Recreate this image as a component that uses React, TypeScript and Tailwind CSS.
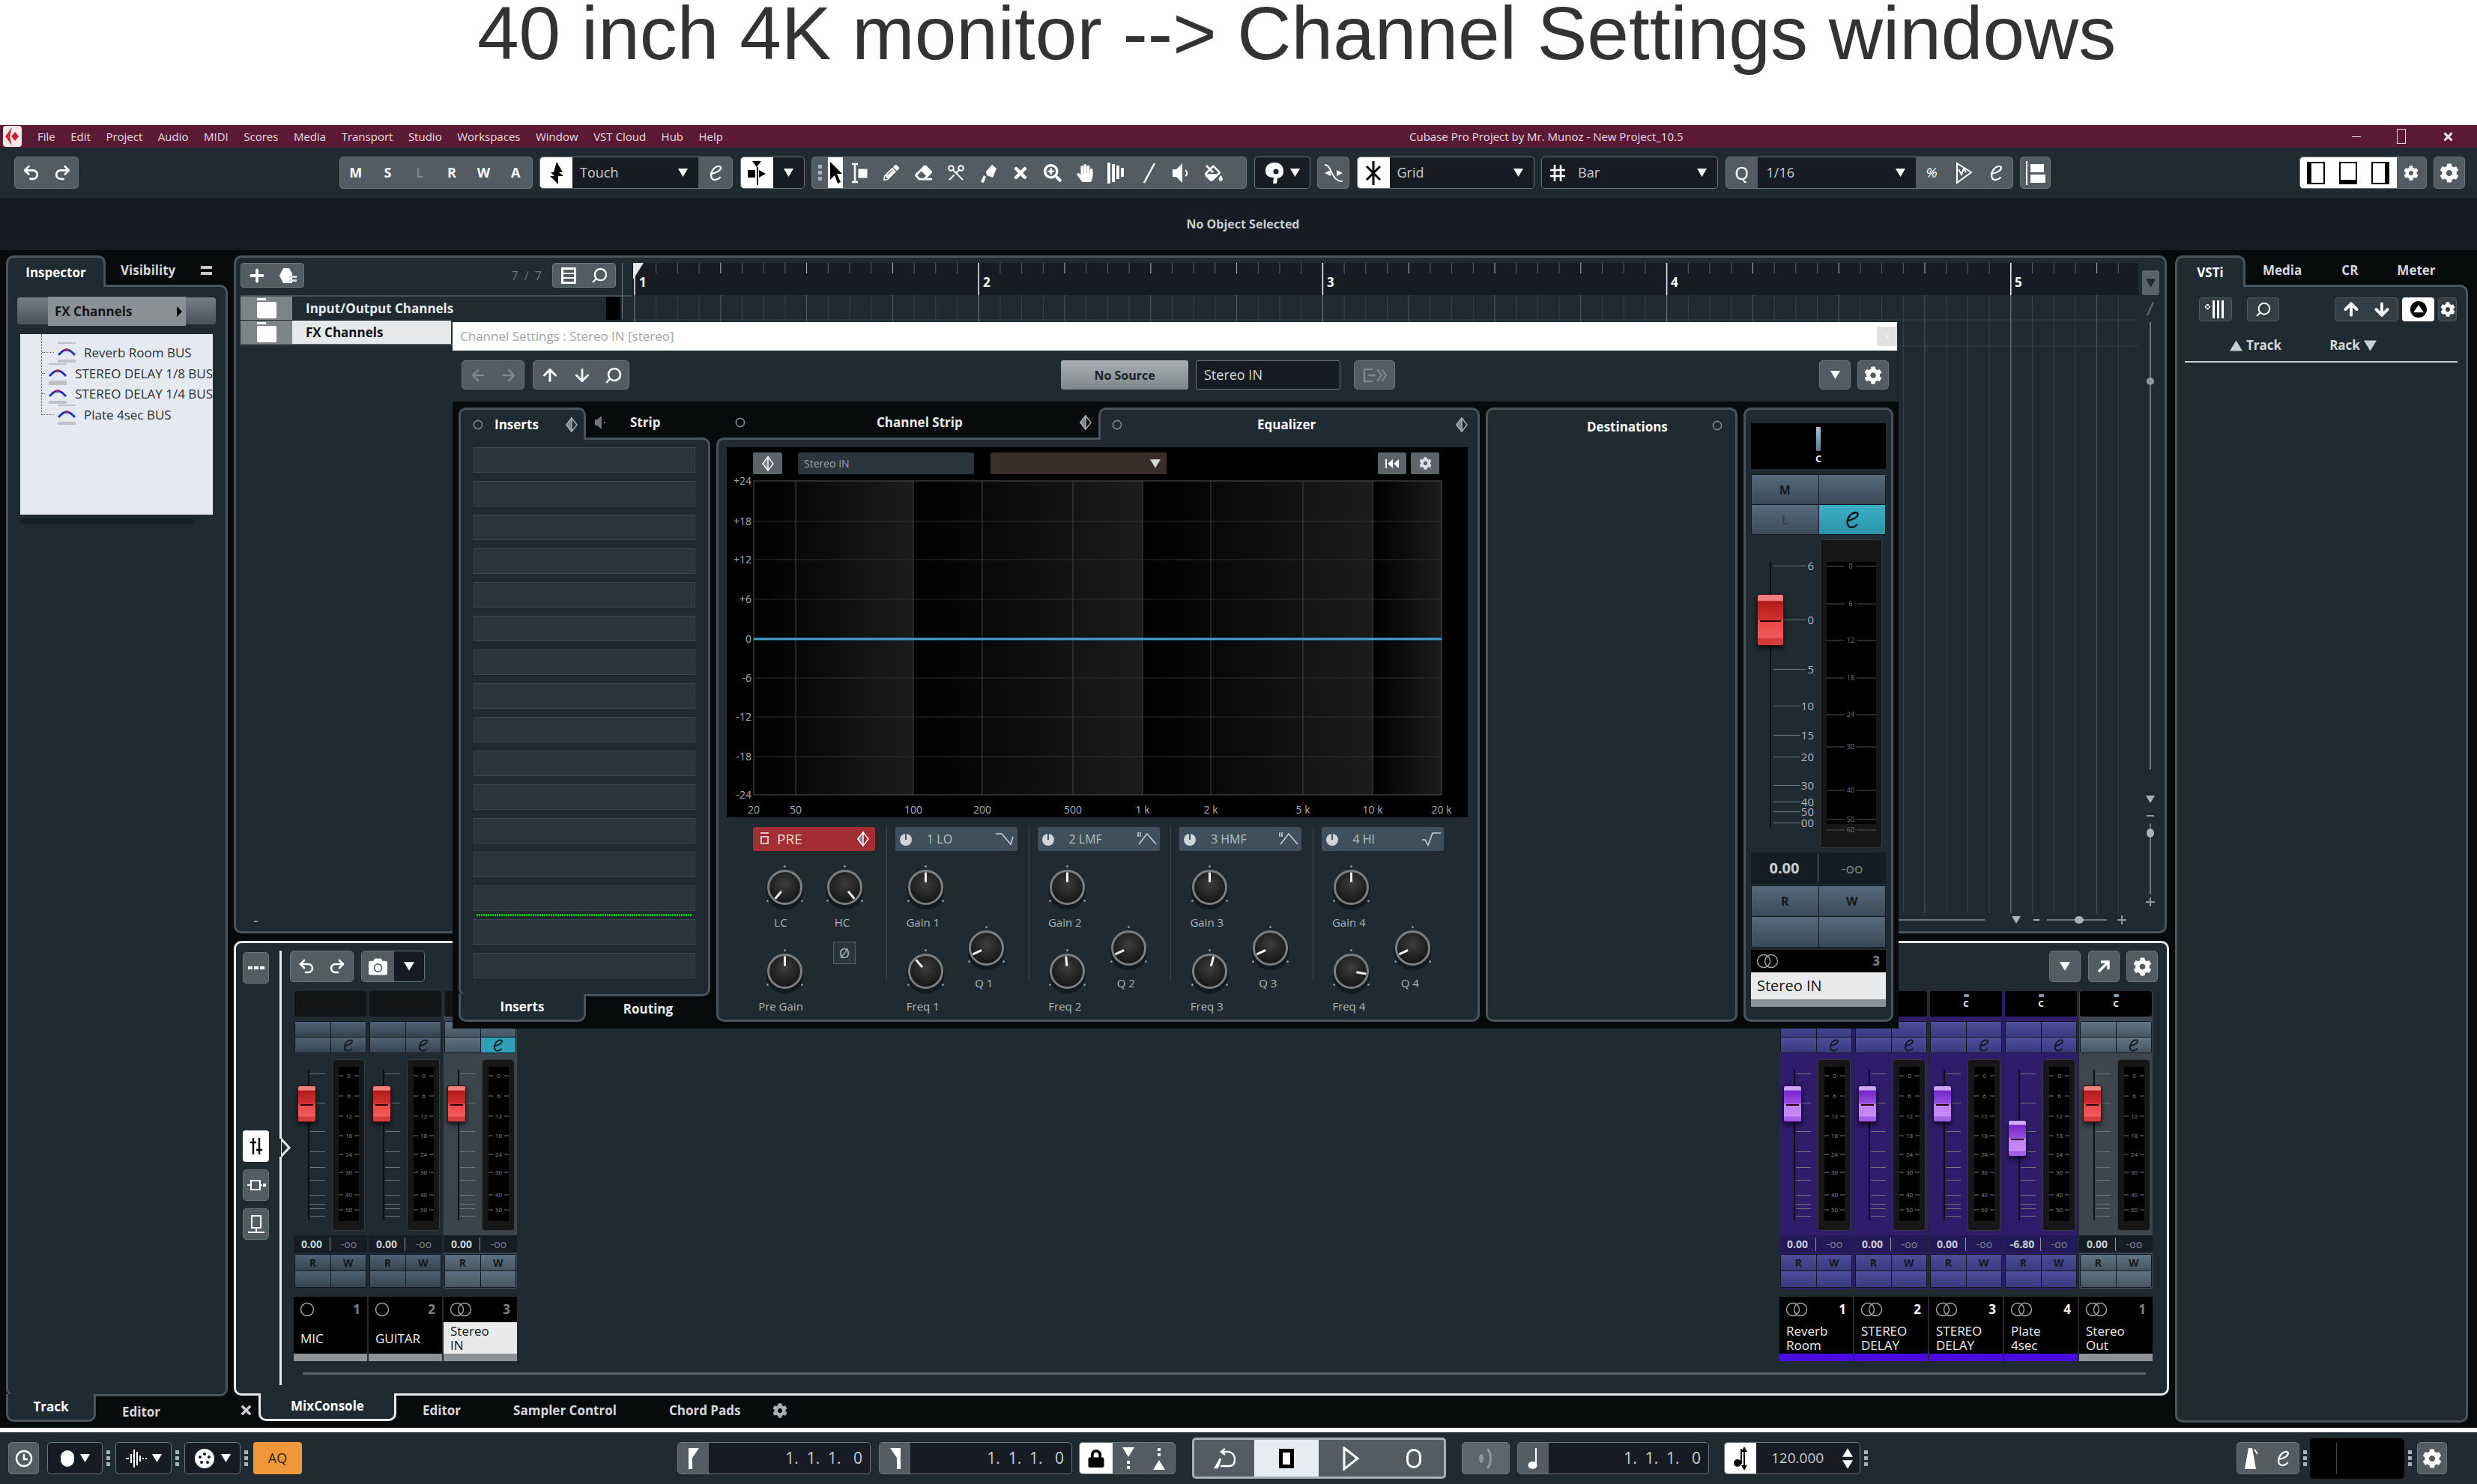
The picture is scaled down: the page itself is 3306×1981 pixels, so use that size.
import type { ReactNode } from 'react';
import { ArrowDown, ArrowLeft, ArrowRight, ArrowUp, Plus, Redo2, Scissors, Search, Undo2 } from 'lucide-react';
import { FaCamera, FaCog, FaEraser, FaFillDrip, FaHandPaper, FaLock, FaPencilAlt, FaSearchPlus, FaTimes } from 'react-icons/fa';

const menus = ['File', 'Edit', 'Project', 'Audio', 'MIDI', 'Scores', 'Media', 'Transport', 'Studio', 'Workspaces', 'Window', 'VST Cloud', 'Hub', 'Help'];

function Caret({ size = 13, up = false, className = 'fill-white' }: { size?: number; up?: boolean; className?: string }) {
  return (
    <svg width={size} height={size} viewBox="0 0 12 12" className={className}>
      <path d={up ? 'M6 1 L12 11 L0 11 Z' : 'M0 1 L12 1 L6 11 Z'} />
    </svg>
  );
}

function IconE({ size = 24, className = 'stroke-white' }: { size?: number; className?: string }) {
  return (
    <svg width={size} height={size} viewBox="0 0 24 24" fill="none" strokeWidth="2.2" strokeLinecap="round" className={className}>
      <path d="M6 13 C12 12 19 9 19 5 C19 2 13 2 9 7 C5 12 5 20 10 21 C13 21.5 16 20 18 18" />
    </svg>
  );
}

function Ring({ size = 14 }: { size?: number }) {
  return (
    <svg width={size} height={size} viewBox="0 0 14 14" fill="none" className="stroke-[#7d878c]" strokeWidth="1.6">
      <circle cx="7" cy="7" r="5.6" />
    </svg>
  );
}

function Rings({ mono = false }: { mono?: boolean }) {
  return (
    <svg width="32" height="20" viewBox="0 0 32 20" fill="none" className="stroke-[#a3a9ac]" strokeWidth="1.4">
      {mono ? <circle cx="11" cy="10" r="8.5" /> : (<><circle cx="11" cy="10" r="8.5" /><circle cx="21" cy="10" r="8.5" /></>)}
    </svg>
  );
}

function Diamond({ className = 'stroke-[#aab2b6]' }: { className?: string }) {
  return (
    <svg width="16" height="20" viewBox="0 0 16 20" fill="none" strokeWidth="1.4" className={className}>
      <path d="M8 1 L15 10 L8 19 L1 10 Z" />
      <path d="M8 1 L1 10 L8 19 Z" className="fill-[#7a8489]" />
    </svg>
  );
}

function Gear({ size = 22, className = 'text-white' }: { size?: number; className?: string }) {
  return <FaCog size={size} className={className} />;
}

function Group({ className = '', children }: { className?: string; children?: ReactNode }) {
  return <div className={`flex h-[43px] items-stretch overflow-hidden rounded-[5px] border border-[#6b757a] bg-[#525c62] ${className}`}>{children}</div>;
}

function Cell({ className = 'w-[43px]', children }: { className?: string; children?: ReactNode }) {
  return <div className={`flex shrink-0 items-center justify-center ${className}`}>{children}</div>;
}

function SelectField({ label, w, icon }: { label: string; w: string; icon: ReactNode }) {
  return (
    <div className={`flex h-[43px] overflow-hidden rounded-[5px] border border-[#6b757a] bg-[#161c22] ${w}`}>
      {icon}
      <span className="ml-[10px] self-center text-[18px] text-[#c9ced2]">{label}</span>
      <span className="ml-auto mr-[14px] self-center"><Caret /></span>
    </div>
  );
}

function Dots() {
  return (
    <div className="flex w-[8px] flex-col items-center justify-center gap-[3px]">
      <div className="h-[5px] w-[5px] bg-[#aab2b6]" />
      <div className="h-[5px] w-[5px] bg-[#aab2b6]" />
      <div className="h-[5px] w-[5px] bg-[#aab2b6]" />
    </div>
  );
}

function Toolbar() {
  const tools: ReactNode[] = [
    <svg key="r" width="26" height="30" viewBox="0 0 26 30" className="fill-white stroke-white"><path d="M3 3 H11 M3 27 H11 M7 3 V27" strokeWidth="2.5" /><rect x="12" y="10" width="11" height="11" /></svg>,
    <FaPencilAlt key="p" size={21} className="text-white" />,
    <FaEraser key="e" size={23} className="text-white" />,
    <Scissors key="s" size={26} strokeWidth={1.8} className="rotate-90 text-white" />,
    <svg key="g" width="24" height="28" viewBox="0 0 24 28" className="fill-white"><path d="M9 12 L17 3 L23 8 L18 20 L10 17 Z" /><path d="M6 17 L9 19 L6 27 L2 26 Z" /></svg>,
    <FaTimes key="x" size={24} className="text-white" />,
    <FaSearchPlus key="z" size={24} className="text-white" />,
    <FaHandPaper key="h" size={24} className="text-white" />,
    <svg key="b" width="28" height="30" viewBox="0 0 28 30" className="fill-white"><rect x="1" y="1" width="4" height="28" /><rect x="7" y="3" width="4" height="24" /><rect x="13" y="5" width="4" height="18" /><rect x="19" y="8" width="4" height="12" /></svg>,
    <svg key="l" width="20" height="30" viewBox="0 0 20 30" className="stroke-white" strokeWidth="2.5"><path d="M17 2 L3 28" /></svg>,
    <svg key="m" width="26" height="28" viewBox="0 0 26 28" className="fill-white"><path d="M14 1 V27 L6 19 H1 V9 H6 Z" /><path d="M18 10 C21 12 21 16 18 18" fill="none" stroke="#fff" strokeWidth="2" /></svg>,
    <FaFillDrip key="f" size={24} className="text-white" />,
  ];
  return (
    <div className="flex h-[67px] items-center gap-[9.5px] bg-[#202a31] pl-[19px] pr-[16px]">
      <Group className="w-[86px]">
        <Cell className="flex-1"><Undo2 size={25} strokeWidth={2.6} className="text-white" /></Cell>
        <Cell className="flex-1"><Redo2 size={25} strokeWidth={2.6} className="text-white" /></Cell>
      </Group>
      <Group className="ml-[338px] w-[258px]">
        {['M', 'S', 'L', 'R', 'W', 'A'].map(l => (
          <Cell key={l} className={`flex-1 text-[18px] font-bold ${l === 'L' ? 'text-[#7b858a]' : 'text-white'}`}>{l}</Cell>
        ))}
      </Group>
      <div className="flex h-[43px] w-[258px] overflow-hidden rounded-[5px] border border-[#6b757a] bg-[#161c22]">
        <Cell className="w-[43px] bg-white">
          <svg width="24" height="32" viewBox="0 0 24 32" className="fill-black"><path d="M12 1 L20 15 H15 L21 20 H14 V31 L3 20 H9 L4 15 H8 Z" /></svg>
        </Cell>
        <span className="ml-[10px] self-center text-[18px] text-[#c9ced2]">Touch</span>
        <span className="ml-auto mr-[14px] self-center"><Caret /></span>
        <Cell className="w-[45px] bg-[#525c62]"><IconE /></Cell>
      </div>
      <div className="flex h-[43px] w-[86px] overflow-hidden rounded-[5px] border border-[#6b757a] bg-[#161c22]">
        <Cell className="w-[43px] bg-white">
          <svg width="26" height="34" viewBox="0 0 26 34" className="fill-black"><path d="M7 1 H19 L13 9 Z M13 9 H15 V33 H13 Z M1 13 H11 V23 H1 Z M16 13 L25 18 L16 23 Z" /></svg>
        </Cell>
        <Cell className="flex-1"><Caret /></Cell>
      </div>
      <Group className="w-[581px]">
        <div className="flex w-[21px] items-center justify-center"><Dots /></div>
        <Cell className="bg-white">
          <svg width="20" height="32" viewBox="0 0 20 32" className="fill-black"><path d="M3 1 V25 L9 19 L13 30 L17 28 L12 17 H19 Z" /></svg>
        </Cell>
        {tools.map((t, i) => <Cell key={i}>{t}</Cell>)}
      </Group>
      <div className="flex h-[43px] w-[75px] items-center justify-center gap-[8px] rounded-[5px] border border-[#6b757a] bg-[#161c22]">
        <svg width="26" height="30" viewBox="0 0 26 30" className="fill-white"><path d="M13 1 C22 1 25 7 25 13 C25 19 20 22 17 22 L16 29 H11 L12 21 C4 21 1 17 1 12 C1 5 6 1 13 1 Z" /><circle cx="15" cy="13" r="3.5" fill="#161c22" /></svg>
        <Caret />
      </div>
      <Group className="w-[43px]">
        <Cell className="flex-1">
          <svg width="28" height="32" viewBox="0 0 28 32" fill="none" className="stroke-white" strokeWidth="2"><path d="M2 5 C12 5 10 27 26 27" /><path d="M2 16 L10 12 V20 Z M26 16 L18 12 V20 Z" className="fill-white" stroke="none" /></svg>
        </Cell>
      </Group>
      <SelectField label="Grid" w="w-[237px]" icon={
        <Cell className="w-[43px] bg-white">
          <svg width="26" height="34" viewBox="0 0 26 34" fill="none" className="stroke-black" strokeWidth="3"><path d="M13 1 V33 M4 8 L22 26 M22 8 L4 26" /></svg>
        </Cell>
      } />
      <SelectField label="Bar" w="w-[236px]" icon={
        <Cell className="ml-[4px] w-[34px]">
          <svg width="24" height="28" viewBox="0 0 24 28" fill="none" className="stroke-white" strokeWidth="2.6"><path d="M8 3 V25 M16 3 V25 M2 10 H22 M2 18 H22" /></svg>
        </Cell>
      } />
      <div className="flex h-[43px] w-[384px] overflow-hidden rounded-[5px] border border-[#6b757a] bg-[#161c22]">
        <Cell className="w-[42px] bg-[#525c62]"><span className="text-[24px] text-white">Q</span></Cell>
        <span className="ml-[12px] self-center text-[18px] text-[#c9ced2]">1/16</span>
        <span className="ml-auto mr-[14px] self-center"><Caret /></span>
        <div className="flex w-[129px] items-center bg-[#525c62]">
          <Cell><span className="text-[19px] italic text-white">%</span></Cell>
          <Cell>
            <svg width="24" height="30" viewBox="0 0 24 30" fill="none" className="stroke-white" strokeWidth="2"><path d="M3 2 L22 14 L3 28 Z" /><path d="M5 10 L9 17 L12 9 L15 14" /></svg>
          </Cell>
          <Cell><IconE /></Cell>
        </div>
      </div>
      <Group className="w-[41px]">
        <Cell className="flex-1">
          <svg width="28" height="34" viewBox="0 0 28 34" className="fill-white"><rect x="1" y="1" width="2" height="32" /><rect x="7" y="5" width="18" height="11" /><rect x="7" y="19" width="20" height="11" /></svg>
        </Cell>
      </Group>
      <div className="ml-auto flex h-[43px] w-[170px] overflow-hidden rounded-[5px] border border-[#6b757a] bg-[#525c62]">
        {['l', 'b', 'r'].map(k => (
          <Cell key={k} className="w-[43px] bg-white">
            <div className="relative h-[30px] w-[24px] border-2 border-black">
              {k === 'l' && <div className="absolute bottom-0 left-0 top-0 w-[4px] bg-black" />}
              {k === 'b' && <div className="absolute bottom-0 left-0 right-0 h-[4px] bg-black" />}
              {k === 'r' && <div className="absolute bottom-0 right-0 top-0 w-[4px] bg-black" />}
            </div>
          </Cell>
        ))}
        <Cell className="flex-1"><Gear size={20} /></Cell>
      </div>
      <Group className="w-[42px]"><Cell className="flex-1"><Gear size={26} /></Cell></Group>
    </div>
  );
}

function TabText({ children, className = '' }: { children: ReactNode; className?: string }) {
  return <span className={`text-[17px] font-bold ${className}`}>{children}</span>;
}

function LeftPanel() {
  const items = ['Reverb Room BUS', 'STEREO DELAY 1/8 BUS', 'STEREO DELAY 1/4 BUS', 'Plate 4sec BUS'];
  return (
    <div className="flex w-[296px] flex-col">
      <div className="flex h-[39px] items-center">
        <div className="z-10 -mb-[3px] flex h-[42px] w-[133px] items-center justify-center self-start rounded-t-[10px] border-x-[3px] border-t-[3px] border-[#4a555b] bg-[#1f2a31]">
          <TabText className="text-white">Inspector</TabText>
        </div>
        <TabText className="ml-[20px] text-[#d5d8da]">Visibility</TabText>
        <div className="ml-[34px] flex flex-col gap-[4px]">
          <div className="h-[4px] w-[15px] bg-[#c5c9cc]" />
          <div className="h-[4px] w-[15px] bg-[#c5c9cc]" />
        </div>
      </div>
      <div className="flex h-[1484px] flex-col rounded-tr-[10px] rounded-b-[10px] border-[3px] border-[#4a555b] bg-[#1f2a31] pl-[12px] pr-[13px]">
        <div className="relative mt-[14px] h-[36px] w-[265px] rounded-[4px] bg-[linear-gradient(#777f84,#4a5358)]">
          <div className="absolute -bottom-[2px] -top-[1px] left-[41px] flex w-[184px] items-center bg-[#8a9094] pl-[9px]">
            <span className="text-[17px] font-bold text-[#141719]">FX Channels</span>
            <span className="ml-auto mr-[5px]"><svg width="7" height="14" viewBox="0 0 7 14" className="fill-black"><path d="M0 0 L7 7 L0 14 Z" /></svg></span>
          </div>
        </div>
        <div className="relative ml-[4px] mt-[13px] h-[241px] w-[257px] overflow-hidden bg-[#e4e9f2] pt-[11px]">
          <div className="absolute left-[28px] top-0 h-[108px] border-l border-dotted border-[#444]" />
          {items.map(it => (
            <div key={it} className="flex h-[27.5px] items-center whitespace-nowrap">
              <div className="ml-[29px] w-[16px] border-t border-dotted border-[#666]" />
              <svg width="24" height="27" viewBox="0 0 24 27" className="ml-[5px] shrink-0">
                <path d="M0 1 H24 M0 24 H24 M0 26 H24" stroke="#9a9a9a" strokeWidth="1" />
                <path d="M1 17 C6 12 8 10 12 10 C16 10 18 12 23 17" stroke="#1a2fc4" strokeWidth="3" fill="none" />
                <circle cx="12" cy="10" r="2" fill="#d0202a" />
              </svg>
              <span className="ml-[11px] text-[17px] text-[#2a2d30]">{it}</span>
            </div>
          ))}
        </div>
        <div className="ml-[4px] mt-[5px] h-[8px] w-[232px] rounded-full bg-[#172026]" />
      </div>
      <div className="flex h-[36px]">
        <div className="z-10 -mt-[3px] flex h-[37px] w-[120px] items-center justify-center rounded-b-[10px] border-x-[3px] border-b-[3px] border-[#4a555b] bg-[#1f2a31]">
          <TabText className="text-white">Track</TabText>
        </div>
        <TabText className="ml-[35px] mt-[8px] text-[#d5d8da]">Editor</TabText>
      </div>
    </div>
  );
}

function Timeline() {
  const ticks = Array.from({ length: 70 }, (_, i) => i);
  return (
    <svg width="2010" height="888" viewBox="0 0 2010 888" className="block">
      <rect x="0" y="0" width="2010" height="43" fill="#161c22" />
      {ticks.map(i => {
        const x = 3 + i * 28.7;
        const bar = i % 16 === 0;
        const beat = i % 4 === 0;
        return (
          <g key={i}>
            <line x1={x} x2={x} y1={0} y2={bar ? 43 : 14} stroke={bar ? '#e6e8ea' : beat ? '#b4babd' : '#59636a'} strokeWidth={bar ? 1.6 : 1} />
            <line x1={x} x2={x} y1={43} y2={868} stroke={bar ? '#7a8388' : beat ? '#566066' : '#38434a'} strokeWidth="1" />
          </g>
        );
      })}
      <path d="M1 0 H15 L1 22 Z" fill="#e6e8ea" />
      {[1, 2, 3, 4, 5].map((n, i) => (
        <text key={n} x={9 + i * 459} y={32} fontSize="17" fontWeight="700" fill="#fff">{n}</text>
      ))}
      <line x1="0" x2="2010" y1="76" y2="76" stroke="#38434a" />
      <line x1="0" x2="2010" y1="111" y2="111" stroke="#38434a" />
      <line x1="1689" x2="1805" y1="877" y2="877" stroke="#6c767b" strokeWidth="2" />
      <path d="M1841 872 H1853 L1847 882 Z" fill="#aab2b6" />
      <line x1="1870" x2="1878" y1="877" y2="877" stroke="#aab2b6" strokeWidth="2" />
      <line x1="1888" x2="1968" y1="877" y2="877" stroke="#6c767b" strokeWidth="2" />
      <ellipse cx="1931" cy="877" rx="6" ry="5" fill="#aab2b6" />
      <path d="M1982 877 H1994 M1988 871 V883" stroke="#8f989c" strokeWidth="2" />
    </svg>
  );
}

function ProjectRail() {
  return (
    <svg width="35" height="888" viewBox="0 0 35 888" className="block">
      <rect x="5" y="10" width="23" height="33" rx="3" fill="#59636a" />
      <path d="M10 21 H23 L16.5 33 Z" fill="#1f2a31" />
      <path d="M20 52 L12 70" stroke="#59636a" strokeWidth="2.5" />
      <line x1="16" x2="16" y1="79" y2="153" stroke="#6c767b" strokeWidth="2" />
      <circle cx="16" cy="158" r="5" fill="#8f989c" />
      <line x1="16" x2="16" y1="163" y2="676" stroke="#6c767b" strokeWidth="2" />
      <path d="M10 711 H22 L16 721 Z" fill="#aab2b6" />
      <line x1="11" x2="21" y1="738" y2="738" stroke="#8f989c" strokeWidth="2" />
      <line x1="16" x2="16" y1="748" y2="843" stroke="#6c767b" strokeWidth="2" />
      <ellipse cx="16" cy="761" rx="5" ry="6" fill="#aab2b6" />
      <path d="M10 853 H22 M16 847 V859" stroke="#8f989c" strokeWidth="2" />
    </svg>
  );
}

function ProjectPanel() {
  return (
    <div className="flex h-[905px] w-[2580px] rounded-[10px] border-[3px] border-[#4a555b] bg-[#1f2a31]">
      <div className="relative w-[529px] pl-[6px] pt-[7px]">
        <div className="flex h-[33px] items-center">
          <div className="flex h-[33px] w-[85px] items-center justify-around rounded-[4px] border border-[#6b757a] bg-[#525c62]">
            <Plus size={26} strokeWidth={3.5} className="text-white" />
            <svg width="26" height="22" viewBox="0 0 26 22" className="fill-white"><path d="M7 1 H15 L19 8 V21 H7 L2 11 Z" /><path d="M14 12 H25 M14 16 H25 M14 20 H25" stroke="#525c62" strokeWidth="0" /><rect x="15" y="11" width="10" height="3" fill="#ddd" /><rect x="15" y="16" width="10" height="3" fill="#ddd" /></svg>
          </div>
          <span className="ml-auto text-[16px] tracking-[2px] text-[#6f797e]">7 / 7</span>
          <div className="ml-[12px] mr-[22px] flex h-[33px] w-[85px] items-center justify-around rounded-[4px] border border-[#6b757a] bg-[#525c62]">
            <svg width="24" height="24" viewBox="0 0 24 24" className="fill-white"><path fillRule="evenodd" d="M2 1 H22 V23 H2 Z M5 4 V8 H19 V4 Z M5 10 V14 H19 V10 Z M5 16 V20 H19 V16 Z" /></svg>
            <Search size={23} strokeWidth={2.4} className="-scale-x-100 text-white" />
          </div>
        </div>
        <div className="mt-[10px] flex flex-col gap-[1px]">
          <div className="flex h-[33px] items-stretch border-t-2 border-[#4a555b]">
            <div className="flex w-[69px] items-center justify-center bg-[#7c8488]"><Folder /></div>
            <div className="flex w-[419px] items-center pl-[18px]"><span className="text-[17px] font-bold text-[#e9ecee]">Input/Output Channels</span></div>
            <div className="w-[19px] bg-black" />
          </div>
          <div className="flex h-[33px] items-stretch border-b-2 border-[#4a555b]">
            <div className="flex w-[69px] items-center justify-center bg-[#7c8488]"><Folder /></div>
            <div className="flex w-[212px] items-center bg-[#e6e8ea] pl-[18px]"><span className="text-[17px] font-bold text-[#111]">FX Channels</span></div>
          </div>
        </div>
        <div className="absolute bottom-[12px] left-[24px] h-[2px] w-[5px] bg-[#8f989c]" />
        <div className="absolute left-[515px] top-[7px] h-[75px] w-px bg-[#6b757a]" />
      </div>
      <div className="pt-[7px]"><Timeline /></div>
      <div className="pt-[7px]"><ProjectRail /></div>
    </div>
  );
}

const scaleTicks = [19, 58, 96, 123, 144, 161, 181, 193, 199, 209];
const meterLabels = [['0', 22], ['6', 49], ['12', 76], ['18', 102], ['24', 127], ['30', 151], ['40', 181], ['50', 201]] as const;

function SmallMeter() {
  return (
    <svg width="44" height="229" viewBox="0 0 44 229" className="absolute left-[51px] top-0">
      <rect x="0.5" y="0.5" width="43" height="228" rx="4" fill="#171717" stroke="#3a3a3a" />
      <rect x="9" y="10" width="27" height="206" fill="#000" />
      {meterLabels.map(([l, y]) => (
        <g key={l}>
          <path d={`M9 ${y} H15 M30 ${y} H36`} stroke="#777" strokeWidth="1" />
          <text x="22.5" y={y + 3} fontSize="8" fill="#8a8a8a" textAnchor="middle">{l}</text>
        </g>
      ))}
    </svg>
  );
}

type Kind = 'in' | 'sel' | 'fx' | 'out';

const kindBody: Record<Kind, string> = {
  in: '',
  sel: 'bg-[#3a454c]',
  fx: 'bg-[#2f1d6b]',
  out: 'bg-[#3d474d]',
};
const kindBtn: Record<Kind, string> = {
  in: 'bg-[linear-gradient(#4f6276,#35444f)]',
  sel: 'bg-[linear-gradient(#5d7082,#465662)]',
  fx: 'bg-[linear-gradient(#4d4d9a,#3a3a80)]',
  out: 'bg-[linear-gradient(#607686,#465561)]',
};

function FaderKnob({ violet, className }: { violet: boolean; className: string }) {
  const fill = violet
    ? 'border-[#1c0b4a] bg-[linear-gradient(#cfa6f5_0%,#cfa6f5_11%,#7722cc_13%,#9a4fe0_49%,#c080f2_52%,#c689f5_85%,#a35fe6_87%)]'
    : 'border-[#4a0a0a] bg-[linear-gradient(#f08080_0%,#f08080_11%,#b31d1d_13%,#d22f2f_49%,#ec4646_52%,#f05c5c_85%,#d63c3c_87%)]';
  return (
    <div className={`absolute rounded-[3px] border shadow-[0_4px_6px_rgba(0,0,0,0.6)] ${fill} ${className}`}>
      <div className="absolute left-[3px] right-[3px] top-1/2 h-[2px] bg-[#2a0505]" />
    </div>
  );
}

function Channel({ name, num, kind, stereo, pan, gain = '0.00', low, numDim }: {
  name: string[]; num: number; kind: Kind; stereo?: boolean; pan?: boolean; gain?: string; low?: boolean; numDim?: boolean;
}) {
  const violet = kind === 'fx';
  return (
    <div className="flex w-[98px] flex-col">
      <div className={`flex h-[398px] flex-col rounded-[4px] ${kindBody[kind]}`}>
        <div className={`mx-[1px] flex h-[34px] flex-col items-center rounded-[3px] ${pan ? 'bg-black' : 'bg-[#121416]'}`}>
          {pan && (<>
            <div className="mt-[4px] h-[4px] w-[7px] rounded-[1px] bg-[#7f9bab]" />
            <span className="text-[15px] font-semibold leading-[15px] text-white">c</span>
          </>)}
        </div>
        <div className="mx-[1px] mt-[6px] grid h-[43px] grid-cols-2 grid-rows-2 gap-[1px] rounded-[3px] border border-[#11171c] bg-[#11171c]">
          <div className={kindBtn[kind]} />
          <div className={kindBtn[kind]} />
          <div className={kindBtn[kind]} />
          <div className={`flex items-center justify-center ${kind === 'sel' ? 'bg-[#2f9fb6]' : kindBtn[kind]}`}>
            <IconE size={19} className="stroke-[#10161a]" />
          </div>
        </div>
        <div className="relative mt-[8px] h-[228px]">
          <div className="absolute left-[19px] top-[14px] h-[201px] w-[2px] bg-[#0b0f12]" />
          {scaleTicks.map(y => (
            <div key={y} className="absolute left-[22px] h-px w-[20px] bg-[#6b757a]" style={{ top: y }} />
          ))}
          <FaderKnob violet={violet} className={low ? 'left-[5px] top-[81px] h-[49px] w-[25px]' : 'left-[5px] top-[35px] h-[49px] w-[25px]'} />
          <SmallMeter />
        </div>
        <div className={`mt-[7px] flex h-[23px] items-center ${violet ? 'bg-[#241a57]' : 'bg-[#161d22]'}`}>
          <span className="w-[48px] text-center text-[14px] font-bold text-[#c8ced2]">{gain}</span>
          <div className="h-[18px] w-px bg-[#8f989c]" />
          <span className="flex-1 text-center text-[14px] text-[#7a858a]">-oo</span>
        </div>
        <div className="mx-[1px] mt-[2px] grid h-[45px] grid-cols-2 grid-rows-2 gap-[1px] rounded-[3px] border border-[#11171c] bg-[#11171c]">
          <div className={`flex items-center justify-center text-[14px] font-bold text-[#14191d] ${kindBtn[kind]}`}>R</div>
          <div className={`flex items-center justify-center text-[14px] font-bold text-[#14191d] ${kindBtn[kind]}`}>W</div>
          <div className={kindBtn[kind]} />
          <div className={kindBtn[kind]} />
        </div>
      </div>
      <div className="mt-[10px] bg-black">
        <div className="flex h-[34px] items-center justify-between pl-[7px] pr-[9px]">
          <Rings mono={!stereo} />
          <span className={`text-[17px] font-bold ${numDim ? 'text-[#7d8488]' : 'text-white'}`}>{num}</span>
        </div>
        <div className={`flex h-[42px] flex-col justify-center pl-[9px] text-[17px] leading-[19px] ${kind === 'sel' ? 'bg-[#e9eaec] text-[#111]' : 'text-[#eef0f1]'}`}>
          {name.map(n => <span key={n}>{n}</span>)}
        </div>
        <div className={`h-[10px] ${violet ? 'bg-[#4a0be0]' : 'bg-[#8c9296]'}`} />
      </div>
    </div>
  );
}

function MixPanel() {
  return (
    <div className="flex h-[607px] w-[2583px] rounded-[10px] border-[3px] border-[#e6eaec] bg-[#1f2a31]">
      <div className="flex w-[58px] flex-col pl-[9px] pt-[12px]">
        <Group className="!h-[42px] w-[35px]">
          <Cell className="flex-1 gap-[2px]">
            <div className="h-[4px] w-[6px] bg-white" /><div className="h-[4px] w-[6px] bg-white" /><div className="h-[4px] w-[6px] bg-white" />
          </Cell>
        </Group>
        <div className="mt-[196px] flex h-[42px] w-[35px] items-center justify-center rounded-[4px] bg-white">
          <svg width="20" height="24" viewBox="0 0 20 24" className="stroke-black" strokeWidth="2.4" fill="none"><path d="M6 1 V23 M14 1 V23 M2 7 H10 M10 17 H18" /></svg>
        </div>
        <Group className="!h-[42px] mt-[10px] w-[35px]">
          <Cell className="flex-1">
            <svg width="26" height="22" viewBox="0 0 26 22" fill="none" className="stroke-white" strokeWidth="2"><path d="M1 11 H6 M6 5 H18 V17 H6 Z M18 11 H21" /><rect x="23" y="10" width="2" height="2" className="fill-white" /></svg>
          </Cell>
        </Group>
        <Group className="!h-[42px] mt-[10px] w-[35px]">
          <Cell className="flex-1">
            <svg width="24" height="26" viewBox="0 0 24 26" fill="none" className="stroke-white" strokeWidth="2"><path d="M6 2 H18 V18 H6 Z M12 18 V23 M1 24 H23" /></svg>
          </Cell>
        </Group>
      </div>
      <div className="relative mt-[10px] h-[580px] w-[3px] bg-[#e6eaec]">
        <svg width="16" height="28" viewBox="0 0 16 28" fill="none" className="absolute left-0 top-[249px] stroke-[#e6eaec]" strokeWidth="3"><path d="M0 0 L13 14 L0 28" /><path d="M0 2 V26" className="stroke-[#1f2a31]" strokeWidth="4" /></svg>
      </div>
      <div className="flex flex-1 flex-col">
        <div className="mt-[10px] flex h-[42px] pl-[11px] pr-[12px]">
          <Group className="!h-[42px] w-[85px]">
            <Cell className="flex-1"><Undo2 size={24} strokeWidth={2.6} className="text-white" /></Cell>
            <Cell className="flex-1"><Redo2 size={24} strokeWidth={2.6} className="text-white" /></Cell>
          </Group>
          <div className="ml-[10px] flex h-[42px] w-[85px] overflow-hidden rounded-[5px] border border-[#6b757a] bg-[#161c22]">
            <Cell className="w-[43px] bg-[#525c62]"><FaCamera size={25} className="text-white" /></Cell>
            <Cell className="flex-1"><Caret size={14} /></Cell>
          </div>
          <Group className="!h-[42px] ml-auto w-[42px]"><Cell className="flex-1"><Caret size={14} /></Cell></Group>
          <Group className="!h-[42px] ml-[10px] w-[42px]"><Cell className="flex-1"><svg width="18" height="18" viewBox="0 0 18 18" fill="none" className="stroke-white" strokeWidth="3.4"><path d="M2 16 L15 3 M5 3 H15 V13" /></svg></Cell></Group>
          <Group className="!h-[42px] ml-[9px] w-[42px]"><Cell className="flex-1"><Gear size={25} /></Cell></Group>
        </div>
        <div className="mt-[12px] flex justify-between pl-[16px] pr-[19px]">
          <div className="flex gap-[2px]">
            <Channel name={['MIC']} num={1} kind="in" numDim />
            <Channel name={['GUITAR']} num={2} kind="in" numDim />
            <Channel name={['Stereo', 'IN']} num={3} kind="sel" stereo numDim />
          </div>
          <div className="flex gap-[2px]">
            <Channel name={['Reverb', 'Room']} num={1} kind="fx" stereo pan />
            <Channel name={['STEREO', 'DELAY']} num={2} kind="fx" stereo pan />
            <Channel name={['STEREO', 'DELAY']} num={3} kind="fx" stereo pan />
            <Channel name={['Plate', '4sec']} num={4} kind="fx" stereo pan low gain="-6.80" />
            <Channel name={['Stereo', 'Out']} num={1} kind="out" stereo pan numDim />
          </div>
        </div>
        <div className="ml-[28px] mt-[15px] h-[3px] w-[2460px] bg-[#5a6469]" />
      </div>
    </div>
  );
}

function Folder() {
  return (
    <svg width="28" height="29" viewBox="0 0 28 29" className="fill-white"><path d="M1 1 H13 V4 H1 Z" /><rect x="1" y="6" width="26" height="22" rx="2" /></svg>
  );
}

function RightPanel() {
  return (
    <div className="flex w-[391px] flex-col">
      <div className="flex h-[39px] items-center">
        <div className="z-10 -mb-[3px] flex h-[42px] w-[94px] items-center justify-center self-start rounded-t-[10px] border-x-[3px] border-t-[3px] border-[#4a555b] bg-[#1f2a31]">
          <TabText className="text-white">VSTi</TabText>
        </div>
        <TabText className="ml-[23px] text-[#d5d8da]">Media</TabText>
        <TabText className="ml-[53px] text-[#d5d8da]">CR</TabText>
        <TabText className="ml-[52px] text-[#d5d8da]">Meter</TabText>
      </div>
      <div className="h-[1519px] rounded-tr-[10px] rounded-b-[10px] border-[3px] border-[#4a555b] bg-[#1f2a31]">
        <div className="ml-[29px] mt-[14px] flex h-[32px]">
          <div className="flex w-[44px] items-center justify-center rounded-[4px] border border-[#4f5a60] bg-[#333e45]">
            <svg width="30" height="26" viewBox="0 0 30 26" className="fill-white"><path d="M1 11 H8 V8 H1 Z M3 6 H6 V13 H3 Z" /><rect x="11" y="1" width="3" height="24" /><rect x="17" y="1" width="3" height="24" /><rect x="23" y="1" width="3" height="24" /></svg>
          </div>
          <div className="ml-[20px] flex w-[43px] items-center justify-center rounded-[4px] border border-[#4f5a60] bg-[#333e45]">
            <Search size={22} strokeWidth={2.2} className="-scale-x-100 text-white" />
          </div>
          <div className="ml-[74px] flex w-[85px] items-center justify-around rounded-[4px] border border-[#4f5a60] bg-[#333e45]">
            <ArrowUp size={26} strokeWidth={3.6} className="text-white" />
            <ArrowDown size={26} strokeWidth={3.6} className="text-white" />
          </div>
          <div className="ml-[5px] flex w-[43px] items-center justify-center rounded-[4px] bg-white">
            <svg width="24" height="24" viewBox="0 0 24 24"><circle cx="12" cy="12" r="11" fill="#000" /><path d="M12 6 L19 16 H5 Z" fill="#fff" /></svg>
          </div>
          <div className="ml-[5px] flex w-[25px] items-center justify-center rounded-[4px] border border-[#4f5a60] bg-[#333e45]"><Gear size={20} /></div>
        </div>
        <div className="ml-[10px] mt-[15px] flex h-[40px] w-[364px] items-center border-b-2 border-[#c8d0d6] pb-[4px]">
          <div className="ml-[60px] flex items-center gap-[5px]">
            <Caret up size={17} className="fill-[#c8d0d6]" />
            <TabText className="text-[#d5d8da]">Track</TabText>
          </div>
          <div className="ml-[64px] flex items-center gap-[5px]">
            <TabText className="text-[#d5d8da]">Rack</TabText>
            <Caret size={17} className="fill-[#c8d0d6]" />
          </div>
        </div>
      </div>
    </div>
  );
}

function Knob({ angle }: { angle: number }) {
  return (
    <svg width="47" height="47" viewBox="-23.5 -23.5 47 47" className="overflow-visible">
      <defs>
        <radialGradient id="knobFill" cx="50%" cy="40%" r="60%">
          <stop offset="0%" stopColor="#3d3d3d" />
          <stop offset="100%" stopColor="#141414" />
        </radialGradient>
      </defs>
      <ellipse cx="0" cy="5" rx="25" ry="25" fill="#000" opacity="0.35" />
      <circle r="22" fill="url(#knobFill)" stroke="#7c7f80" strokeWidth="3" />
      <line x1="0" x2="0" y1="-7" y2="-20" stroke="#f2f2f2" strokeWidth="3" transform={`rotate(${angle})`} />
      <circle cx="0" cy="-28" r="1.5" fill="#8d9396" />
      <circle cx="-23" cy="18" r="1.5" fill="#8d9396" />
      <circle cx="23" cy="18" r="1.5" fill="#8d9396" />
    </svg>
  );
}

function KnobLabel({ children, className = '' }: { children: ReactNode; className?: string }) {
  return <div className={`h-[20px] pr-[6px] text-center text-[15px] leading-[20px] text-[#aeb5b9] ${className}`}>{children}</div>;
}

function Band({ title, curve, freq }: { title: string; curve: string; freq: number }) {
  const n = title[0];
  return (
    <div className="flex w-[189.5px]">
      <div className="mt-[-1px] h-[207px] w-px bg-[#3c474e]" />
      <div className="ml-[11px] w-[163px]">
        <div className="flex h-[32px] w-[163px] items-center rounded-[3px] bg-[#3f505c] pl-[5px]">
          <svg width="18" height="20" viewBox="0 0 18 20"><circle cx="9" cy="11" r="8" fill="#cfd4d7" /><rect x="8" y="1" width="2" height="10" fill="#3f505c" /></svg>
          <span className="ml-[19px] text-[16px] text-[#b8c0c5]">{title}</span>
          <svg width="28" height="22" viewBox="0 0 28 22" fill="none" className="ml-auto mr-[3px] stroke-[#c5ccd0]" strokeWidth="1.6"><path d={curve} /></svg>
        </div>
        <div className="flex">
          <div className="flex w-[80px] flex-col">
            <div className="ml-[16.5px] mt-[25px] h-[47px]"><Knob angle={0} /></div>
            <KnobLabel className="mt-[13px]">Gain {n}</KnobLabel>
            <div className="ml-[16.5px] mt-[32px] h-[47px]"><Knob angle={freq} /></div>
            <KnobLabel className="mt-[13px]">Freq {n}</KnobLabel>
          </div>
          <div className="flex w-[84px] flex-col">
            <div className="ml-[18.5px] mt-[106px] h-[47px]"><Knob angle={-115} /></div>
            <KnobLabel className="mt-[13px]">Q {n}</KnobLabel>
          </div>
        </div>
      </div>
    </div>
  );
}

function EqGraph() {
  const vs = [[92, '50'], [249, '100'], [341, '200'], [462, '500'], [555, '1 k'], [646, '2 k'], [769, '5 k'], [862, '10 k']] as const;
  const hs = [[0, '+24'], [54, '+18'], [105, '+12'], [158, '+6'], [211, '0'], [263, '-6'], [315, '-12'], [368, '-18'], [419, '-24']] as const;
  return (
    <svg width="989" height="449" viewBox="0 0 989 449" className="block overflow-visible">
      <defs>
        <linearGradient id="eqBand" x1="0" x2="1" y1="0" y2="0">
          <stop offset="0%" stopColor="#000" />
          <stop offset="100%" stopColor="#1c1c1c" />
        </linearGradient>
      </defs>
      <rect x="36" y="0" width="213" height="419" fill="url(#eqBand)" />
      <rect x="249" y="0" width="306" height="419" fill="url(#eqBand)" />
      <rect x="555" y="0" width="307" height="419" fill="url(#eqBand)" />
      <rect x="862" y="0" width="92" height="419" fill="url(#eqBand)" />
      {hs.map(([y, l]) => (
        <g key={l}>
          <line x1="36" x2="954" y1={y} y2={y} stroke={y === 0 || y === 419 ? '#555' : '#2e2e2e'} />
          <text x="33" y={y + 5} textAnchor="end" fontSize="14" fill="#a9b0b4">{l}</text>
        </g>
      ))}
      <line x1="36" x2="36" y1="0" y2="419" stroke="#555" />
      <line x1="954" x2="954" y1="0" y2="419" stroke="#555" />
      {vs.map(([x, l]) => (
        <g key={l}>
          <line x1={x} x2={x} y1="0" y2="419" stroke="#454545" />
          <text x={x} y="444" textAnchor="middle" fontSize="14" fill="#a9b0b4">{l}</text>
        </g>
      ))}
      <text x="36" y="444" textAnchor="middle" fontSize="14" fill="#a9b0b4">20</text>
      <text x="954" y="444" textAnchor="middle" fontSize="14" fill="#a9b0b4">20 k</text>
      <line x1="36" x2="954" y1="211" y2="211" stroke="#4a9fd4" strokeWidth="3" />
    </svg>
  );
}

function EqPanel() {
  return (
    <div className="flex w-[1019px] flex-col">
      <div className="flex h-[40px]">
        <div className="flex h-[40px] w-[510px] items-center pl-[25px]">
          <Ring />
          <TabText className="ml-[175px] text-[#e9ecee]">Channel Strip</TabText>
          <span className="ml-auto mr-[9px]"><Diamond /></span>
        </div>
        <div className="z-10 flex h-[43px] flex-1 items-center rounded-t-[10px] border-x-[3px] border-t-[3px] border-[#4a555b] bg-[#1f2a31] pl-[15px]">
          <Ring />
          <TabText className="ml-[180px] text-white">Equalizer</TabText>
          <span className="ml-auto mr-[13px]"><Diamond /></span>
        </div>
      </div>
      <div className="flex-1 rounded-tl-[10px] rounded-b-[10px] border-[3px] border-[#4a555b] bg-[#1f2a31] pl-[11px]">
        <div className="mt-[10px] h-[494px] w-[989px] bg-black">
          <div className="flex h-[45px] items-start pt-[7px]">
            <div className="ml-[35px] flex h-[29px] w-[39px] items-center justify-center rounded-[2px] bg-[#5b6468]"><Diamond className="stroke-white" /></div>
            <div className="ml-[21px] flex h-[29px] w-[235px] items-center rounded-[2px] bg-[#2a353d] pl-[8px] text-[14px] text-[#9ea6ab]">Stereo IN</div>
            <div className="ml-[22px] flex h-[29px] w-[235px] items-center justify-end rounded-[2px] bg-[#3a2d2a] pr-[8px]"><Caret size={14} className="fill-[#d7d9da]" /></div>
            <div className="ml-[282px] flex h-[29px] w-[38px] items-center justify-center rounded-[2px] bg-[#5b6468]">
              <svg width="20" height="14" viewBox="0 0 20 14" className="fill-white"><rect x="1" y="1" width="2" height="12" /><path d="M11 1 V13 L4 7 Z M19 1 V13 L12 7 Z" /></svg>
            </div>
            <div className="ml-[6px] flex h-[29px] w-[38px] items-center justify-center rounded-[2px] bg-[#5b6468]"><Gear size={17} className="text-[#dfe2e4]" /></div>
          </div>
          <EqGraph />
        </div>
        <div className="ml-[35px] mt-[13px] flex">
          <div className="w-[178px]">
            <div className="flex h-[32px] w-[163px] items-center rounded-[3px] bg-[#a22e33] pl-[9px]">
              <svg width="13" height="18" viewBox="0 0 13 18" fill="none" stroke="#e8d6d6" strokeWidth="1.8"><path d="M1 1 H12" /><rect x="2" y="6" width="9" height="9" /></svg>
              <span className="ml-[10px] text-[19px] text-[#f0dada]">PRE</span>
              <span className="ml-auto mr-[8px]"><Diamond className="stroke-white" /></span>
            </div>
            <div className="flex">
              <div className="flex w-[80px] flex-col">
                <div className="ml-[18.5px] mt-[25px] h-[47px]"><Knob angle={-140} /></div>
                <KnobLabel className="mt-[13px]">LC</KnobLabel>
                <div className="ml-[18.5px] mt-[32px] h-[47px]"><Knob angle={0} /></div>
                <KnobLabel className="mt-[13px]">Pre Gain</KnobLabel>
              </div>
              <div className="flex w-[84px] flex-col">
                <div className="ml-[18.5px] mt-[25px] h-[47px]"><Knob angle={140} /></div>
                <KnobLabel className="mt-[13px]">HC</KnobLabel>
                <div className="ml-[27px] mt-[16px] flex h-[30px] w-[30px] items-center justify-center border border-[#555f65] bg-[#2b353c] text-[18px] text-[#aeb5b9]">Ø</div>
              </div>
            </div>
          </div>
          <Band title="1 LO" freq={-40} curve="M2 4 H10 L22 18 L25 8" />
          <Band title="2 LMF" freq={-5} curve="M2 2 V8 M5 2 V8 M3 18 L14 4 L26 18" />
          <Band title="3 HMF" freq={15} curve="M2 2 V8 M5 2 V8 M3 18 L14 4 L26 18" />
          <Band title="4 HI" freq={100} curve="M2 12 H6 L10 19 L16 3 H27" />
        </div>
      </div>
    </div>
  );
}

function InsertsPanel() {
  const slots = Array.from({ length: 16 }, (_, i) => i);
  return (
    <div className="flex w-[336px] flex-col">
      <div className="flex h-[40px]">
        <div className="z-10 flex h-[43px] w-[170px] items-center rounded-t-[10px] border-x-[3px] border-t-[3px] border-[#4a555b] bg-[#1f2a31] pl-[16px]">
          <Ring />
          <TabText className="ml-[15px] text-white">Inserts</TabText>
          <span className="ml-auto mr-[8px]"><Diamond /></span>
        </div>
        <div className="flex items-center pl-[11px]">
          <svg width="18" height="20" viewBox="0 0 18 20" className="fill-[#6b757a]"><path d="M10 1 V19 L4 14 H1 V6 H4 Z" /><rect x="13" y="9" width="2" height="2" /></svg>
          <TabText className="ml-[30px] text-[#e9ecee]">Strip</TabText>
        </div>
      </div>
      <div className="h-[746px] rounded-tr-[10px] rounded-b-[10px] border-[3px] border-[#4a555b] bg-[#1f2a31] px-[17px] pt-[10px]">
        {slots.map(i => (
          <div key={i} className="relative mb-[11px] h-[34px] w-[296px] border border-[#3a454c] bg-[#29343b]">
            {i === 13 && <div className="absolute -bottom-[8px] left-[3px] right-[3px] h-[3px] bg-[repeating-linear-gradient(90deg,#1db11d_0,#1db11d_2px,#0e4a14_2px,#0e4a14_3px)]" />}
          </div>
        ))}
      </div>
      <div className="flex h-[34px]">
        <div className="z-10 -mt-[3px] flex h-[37px] w-[170px] items-center justify-center rounded-b-[10px] border-x-[3px] border-b-[3px] border-[#4a555b] bg-[#1f2a31]">
          <TabText className="text-white">Inserts</TabText>
        </div>
        <div className="flex flex-1 items-center justify-center"><TabText className="text-[#e9ecee]">Routing</TabText></div>
      </div>
    </div>
  );
}

function StripPanel() {
  const ticks = [['6', 35], ['0', 107], ['5', 173], ['10', 222], ['15', 261], ['20', 290], ['30', 328], ['40', 350], ['50', 363], ['00', 378]] as const;
  const labels = [['0', 36], ['6', 86], ['12', 135], ['18', 185], ['24', 234], ['30', 277], ['40', 335], ['50', 374], ['60', 388]] as const;
  const btn = 'bg-[linear-gradient(#566a7d,#3a4a58)]';
  return (
    <div className="w-[200px] rounded-[10px] border-[3px] border-[#4a555b] bg-[#1f2a31] px-[7px] pt-[18px]">
      <div className="flex h-[61px] flex-col items-center bg-black">
        <div className="mt-[5px] h-[32px] w-[6px] rounded-[1px] bg-[linear-gradient(#a5c3d2,#5d7d90)]" />
        <span className="text-[16px] font-semibold leading-[18px] text-white">c</span>
      </div>
      <div className="mt-[7px] grid h-[81px] grid-cols-2 grid-rows-2 gap-[1px] rounded-[3px] border border-[#11171c] bg-[#11171c]">
        <div className={`flex items-center justify-center text-[16px] font-bold text-[#14191d] ${btn}`}>M</div>
        <div className={btn} />
        <div className={`flex items-center justify-center text-[16px] font-bold text-[#36434e] ${btn}`}>L</div>
        <div className="flex items-center justify-center bg-[linear-gradient(#3cb0c6,#2b93a8)]"><IconE size={26} className="stroke-[#0c1114]" /></div>
      </div>
      <div className="relative mt-[6px] h-[412px]">
        <div className="absolute left-[25px] top-[30px] h-[355px] w-[2px] bg-[#0b0f12]" />
        {ticks.map(([l, y]) => (
          <div key={l} className="absolute left-[30px] flex h-[16px] w-[54px] items-center" style={{ top: y - 8 }}>
            <div className="h-px flex-1 bg-[#6b757a]" />
            <span className="ml-[1px] text-[15px] text-[#aeb5b9]">{l}</span>
          </div>
        ))}
        <FaderKnob violet={false} className="left-[8px] top-[73px] h-[69px] w-[36px]" />
        <svg width="83" height="412" viewBox="0 0 83 412" className="absolute left-[92px] top-0">
          <rect x="0.5" y="0.5" width="82" height="411" rx="3" fill="#171717" stroke="#3a3a3a" />
          <rect x="9" y="30" width="66" height="350" fill="#000" />
          {labels.map(([l, y]) => (
            <g key={l}>
              <path d={`M9 ${y} H33 M49 ${y} H75`} stroke="#555" strokeWidth="1" />
              <text x="41" y={y + 3} fontSize="9" fill="#777" textAnchor="middle">{l}</text>
            </g>
          ))}
        </svg>
      </div>
      <div className="mt-[6px] flex h-[42px] items-center bg-[#161d22]">
        <span className="w-[89px] text-center text-[20px] font-bold text-[#c8ced2]">0.00</span>
        <div className="h-[38px] w-px bg-[#6f797e]" />
        <span className="flex-1 text-center text-[19px] text-[#7a858a]">-oo</span>
      </div>
      <div className="mt-[2px] grid h-[83px] grid-cols-2 grid-rows-2 gap-[1px] rounded-[3px] border border-[#11171c] bg-[#11171c]">
        <div className={`flex items-center justify-center text-[16px] font-bold text-[#14191d] ${btn}`}>R</div>
        <div className={`flex items-center justify-center text-[16px] font-bold text-[#14191d] ${btn}`}>W</div>
        <div className={btn} />
        <div className={btn} />
      </div>
      <div className="mt-[3px] flex h-[30px] items-center justify-between bg-black pl-[6px] pr-[8px]">
        <Rings />
        <span className="text-[17px] font-bold text-[#7d8488]">3</span>
      </div>
      <div className="flex h-[36px] items-center bg-[#e9eaec] pl-[8px] text-[20px] text-[#111]">Stereo IN</div>
      <div className="h-[10px] bg-[#8c9296]" />
    </div>
  );
}

function ChannelSettings() {
  return (
    <div className="absolute left-[604px] top-[430px] z-20 flex h-[943px] w-[1930px] flex-col">
      <div className="flex h-[38px] w-[1928px] items-center bg-white">
        <span className="ml-[10px] text-[17px] text-[#a2a6a9]">Channel Settings : Stereo IN [stereo]</span>
        <div className="ml-auto flex h-[26px] w-[27px] items-center justify-center bg-[#e1e1e1] text-[12px] text-[#f5f5f5]">x</div>
      </div>
      <div className="flex h-[68px] items-start bg-[#1f2a31] pl-[12px] pt-[13px]">
        <div className="flex h-[39px] w-[84px] items-center justify-around rounded-[5px] border border-[#6b757a] bg-[#525c62]">
          <ArrowLeft size={24} strokeWidth={2.6} className="text-[#7d878c]" />
          <ArrowRight size={24} strokeWidth={2.6} className="text-[#7d878c]" />
        </div>
        <div className="ml-[11px] flex h-[39px] w-[129px] items-center justify-around rounded-[5px] border border-[#6b757a] bg-[#525c62]">
          <ArrowUp size={26} strokeWidth={2.6} className="text-white" />
          <ArrowDown size={26} strokeWidth={2.6} className="text-white" />
          <Search size={24} strokeWidth={2.6} className="-scale-x-100 text-white" />
        </div>
        <div className="ml-[576px] flex h-[39px] w-[170px] items-center justify-center rounded-[3px] bg-[linear-gradient(#aab0b4,#7f878c)] text-[16px] font-bold text-[#1d2226]">No Source</div>
        <div className="ml-[10px] flex h-[39px] w-[193px] items-center rounded-[3px] border border-[#6b757a] bg-[#161c22] pl-[10px] text-[18px] text-[#d5d9dc]">Stereo IN</div>
        <div className="ml-[18px] flex h-[39px] w-[55px] items-center justify-center rounded-[5px] border border-[#6b757a] bg-[#525c62]">
          <svg width="34" height="22" viewBox="0 0 34 22" fill="none" className="stroke-[#7d878c]" strokeWidth="2.4"><path d="M14 3 H3 V19 H14 M8 11 H18 M20 3 L26 11 L20 19 M26 3 L32 11 L26 19" /></svg>
        </div>
        <div className="ml-[566px] flex h-[39px] w-[42px] items-center justify-center rounded-[5px] border border-[#6b757a] bg-[#525c62]"><Caret size={13} /></div>
        <div className="ml-[9px] flex h-[39px] w-[42px] items-center justify-center rounded-[5px] border border-[#6b757a] bg-[#525c62]"><Gear size={24} /></div>
      </div>
      <div className="flex flex-1 gap-[8px] bg-[#070b0c] pb-[9px] pl-[8px] pt-[8px]">
        <InsertsPanel />
        <EqPanel />
        <div className="flex w-[336px] items-start rounded-[10px] border-[3px] border-[#4a555b] bg-[#1f2a31] pt-[10px]">
          <TabText className="ml-[132px] text-white">Destinations</TabText>
          <span className="ml-auto mr-[17px] mt-[4px]"><Ring /></span>
        </div>
        <StripPanel />
      </div>
    </div>
  );
}

function TimeField({ w, icon, value }: { w: string; icon: ReactNode; value: string }) {
  return (
    <div className={`flex h-[43px] overflow-hidden rounded-[5px] border border-[#6b757a] bg-[#161c22] ${w}`}>
      <Cell className="w-[41px] bg-[#525c62]">{icon}</Cell>
      <span className="ml-auto mr-[10px] self-center whitespace-pre text-[21px] text-[#c8ced2]">{value}</span>
    </div>
  );
}

function Transport() {
  return (
    <div className="flex h-[69px] items-center bg-[#202a31]">
      <Group className="ml-[11px] w-[41px]">
        <Cell className="flex-1">
          <svg width="26" height="34" viewBox="0 0 26 34" fill="none" className="stroke-white" strokeWidth="2.4"><circle cx="13" cy="17" r="10" /><path d="M13 11 V18 H18" /></svg>
        </Cell>
      </Group>
      <div className="ml-[11px] flex h-[43px] w-[74px] items-center justify-center gap-[8px] rounded-[5px] border border-[#6b757a] bg-[#161c22]">
        <div className="h-[22px] w-[18px] rounded-full bg-white" />
        <Caret />
      </div>
      <div className="ml-[3px]"><Dots /></div>
      <div className="ml-[6px] flex h-[43px] w-[75px] items-center justify-center gap-[6px] rounded-[5px] border border-[#6b757a] bg-[#161c22]">
        <svg width="30" height="30" viewBox="0 0 30 30" fill="none" className="stroke-white" strokeWidth="2"><path d="M1 15 H5 M8 9 V21 M12 3 V27 M16 6 V24 M20 11 V19 M24 14 V16 M27 15 H29" /></svg>
        <Caret />
      </div>
      <div className="ml-[3px]"><Dots /></div>
      <div className="ml-[6px] flex h-[43px] w-[75px] items-center justify-center gap-[8px] rounded-[5px] border border-[#6b757a] bg-[#161c22]">
        <svg width="28" height="28" viewBox="0 0 28 28"><circle cx="14" cy="14" r="13" fill="#fff" /><circle cx="8" cy="12" r="2" fill="#161c22" /><circle cx="20" cy="12" r="2" fill="#161c22" /><circle cx="14" cy="8" r="2" fill="#161c22" /><circle cx="10" cy="19" r="2" fill="#161c22" /><circle cx="18" cy="19" r="2" fill="#161c22" /></svg>
        <Caret />
      </div>
      <div className="ml-[3px]"><Dots /></div>
      <div className="ml-[6px] flex h-[43px] w-[65px] items-center justify-center rounded-[4px] bg-[#f0983a] text-[18px] text-[#2b1a06]">AQ</div>
      <TimeField w="ml-[501px] w-[258px]" value="1.  1.  1.   0" icon={<svg width="16" height="30" viewBox="0 0 16 30" className="fill-white"><path d="M1 1 H15 L6 14 V29 H1 Z" /></svg>} />
      <TimeField w="ml-[11px] w-[258px]" value="1.  1.  1.   0" icon={<svg width="16" height="30" viewBox="0 0 16 30" className="fill-white"><path d="M15 1 H1 L10 14 V29 H15 Z" /></svg>} />
      <div className="ml-[9px] flex h-[43px] w-[129px] overflow-hidden rounded-[5px] border border-[#6b757a] bg-[#525c62]">
        <Cell className="w-[44px] bg-white"><FaLock size={24} className="text-black" /></Cell>
        <Cell className="flex-1"><svg width="18" height="32" viewBox="0 0 18 32" className="fill-white"><path d="M1 1 H17 L9 14 Z" /><rect x="7" y="19" width="4" height="4" /><rect x="7" y="26" width="4" height="4" /></svg></Cell>
        <Cell className="flex-1"><svg width="18" height="32" viewBox="0 0 18 32" className="fill-white"><path d="M1 31 H17 L9 18 Z" /><rect x="7" y="2" width="4" height="4" /><rect x="7" y="9" width="4" height="4" /></svg></Cell>
      </div>
      <div className="ml-[22px] flex h-[55px] w-[339px] overflow-hidden rounded-[5px] border-[3px] border-[#a9aeb1] bg-[#525c62]">
        <Cell className="w-[80px]">
          <svg width="30" height="28" viewBox="0 0 30 28" fill="none" className="stroke-white" strokeWidth="2.4"><path d="M10 24 H22 C27 24 29 20 29 15 C29 10 26 6 21 5 H13 M16 1 L11 5 L16 9" /><path d="M3 26 L10 14 L6 26 Z" className="fill-white" /></svg>
        </Cell>
        <Cell className="w-[86px] bg-[#e7ebf2]"><div className="h-[26px] w-[20px] border-[5px] border-black bg-white" /></Cell>
        <Cell className="w-[86px]"><svg width="24" height="32" viewBox="0 0 24 32" fill="none" className="stroke-white" strokeWidth="3"><path d="M3 2 L21 16 L3 30 Z" /></svg></Cell>
        <Cell className="flex-1"><div className="h-[26px] w-[20px] rounded-full border-[3px] border-white" /></Cell>
      </div>
      <div className="ml-[21px] flex h-[43px] w-[64px] items-center justify-center rounded-[5px] border border-[#6b757a] bg-[#5c666b]">
        <svg width="24" height="30" viewBox="0 0 24 30" fill="none" className="stroke-[#8f989c]" strokeWidth="3"><path d="M14 2 C20 8 20 22 14 28" /><ellipse cx="6" cy="15" rx="3" ry="6" className="fill-[#8f989c]" stroke="none" /></svg>
      </div>
      <TimeField w="ml-[10px] w-[256px]" value="1.  1.  1.   0" icon={<svg width="16" height="32" viewBox="0 0 16 32" className="fill-white"><rect x="10" y="2" width="2" height="24" /><ellipse cx="6.5" cy="25" rx="6" ry="5" /></svg>} />
      <div className="ml-[20px] flex h-[43px] w-[182px] overflow-hidden rounded-[5px] border border-[#6b757a] bg-[#161c22]">
        <Cell className="w-[42px] bg-white"><svg width="20" height="34" viewBox="0 0 20 34" className="fill-black"><ellipse cx="6" cy="23" rx="5" ry="5" /><rect x="10" y="4" width="2" height="20" /><path d="M15 1 L19 8 H11 Z M15 33 L19 26 H11 Z M14 8 H16 V26 H14 Z" /></svg></Cell>
        <span className="ml-[20px] self-center text-[19px] text-[#c8ced2]">120.000</span>
        <div className="ml-auto mr-[9px] flex flex-col justify-center gap-[2px]"><Caret up size={14} /><Caret size={14} /></div>
      </div>
      <div className="ml-[3px]"><Dots /></div>
      <div className="ml-[491px] flex h-[43px] w-[84px] items-center justify-around rounded-[5px] border border-[#6b757a] bg-[#525c62]">
        <svg width="22" height="32" viewBox="0 0 22 32" className="fill-white"><path d="M6 2 H11 L16 30 H1 Z" /><path d="M14 4 L18 10" stroke="#fff" strokeWidth="2" /></svg>
        <IconE />
      </div>
      <div className="ml-[3px]"><Dots /></div>
      <div className="relative ml-[3px] h-[54px] w-[126px] rounded-[5px] bg-black">
        <div className="absolute bottom-[6px] left-[35px] top-[6px] w-px bg-[#444]" />
      </div>
      <div className="ml-[3px]"><Dots /></div>
      <Group className="ml-[6px] w-[40px]"><Cell className="flex-1"><Gear size={26} /></Cell></Group>
    </div>
  );
}

export default function App() {
  return (
    <div className="relative h-[1981px] w-[3306px] overflow-hidden bg-white font-['Open_Sans',sans-serif]">
      <div className="h-[173px] pl-[637px] font-['Liberation_Sans',sans-serif] text-[100px] leading-[100px] text-[#333]">
        <div className="-mt-[6px] whitespace-nowrap">40 inch 4K monitor --&gt; Channel Settings windows</div>
      </div>

      <div className="relative flex h-[30px] items-center bg-[#5a1a33] text-[15px] text-[#e9dde1]">
        <svg width="27" height="30" viewBox="0 0 27 30" className="ml-[3px] shrink-0">
          <rect x="1" y="1" width="25" height="28" rx="4" fill="#f3e9ea" />
          <path d="M13 3 L4 15 L13 27 L10 15 Z" fill="#cc2236" />
          <path d="M17 9 L12 15 L17 21 L22 15 Z" fill="#cc2236" />
        </svg>
        <div className="ml-[20px] flex gap-[20.5px]">
          {menus.map(m => <span key={m}>{m}</span>)}
        </div>
        <span className="ml-[916px] text-[15px]">Cubase Pro Project by Mr. Munoz - New Project_10.5</span>
        <div className="ml-auto mr-[30px] flex items-center gap-[48px]">
          <div className="h-px w-[12px] bg-[#e9dde1]" />
          <div className="h-[20px] w-[12px] border border-[#e9dde1]" />
          <FaTimes size={17} className="text-[#e9dde1]" />
        </div>
      </div>

      <Toolbar />

      <div className="flex h-[70px] items-center justify-center bg-[#161c22] pl-[12px] text-[16px] font-bold text-[#c8ced2]">No Object Selected</div>

      <div className="flex h-[572px] min-h-[1572px] gap-[8px] bg-[#070b0c] pl-[8px] pt-[7px]">
        <LeftPanel />
        <div className="flex w-[2583px] flex-col">
          <ProjectPanel />
          <div className="mt-[10px]"><MixPanel /></div>
          <div className="flex h-[36px] items-start">
            <FaTimes size={19} className="ml-[7px] mt-[10px] text-[#c8ced2]" />
            <div className="z-10 ml-[7px] -mt-[3px] flex h-[37px] w-[184px] items-center justify-center rounded-b-[10px] border-x-[3px] border-b-[3px] border-[#e6eaec] bg-[#1f2a31]">
              <TabText className="text-white">MixConsole</TabText>
            </div>
            <div className="ml-[35px] mt-[7px] flex items-center gap-[70px]">
              <TabText className="text-[#d5d8da]">Editor</TabText>
              <TabText className="text-[#d5d8da]">Sampler Control</TabText>
              <div className="flex items-center gap-[43px]">
                <TabText className="text-[#d5d8da]">Chord Pads</TabText>
                <Gear size={20} className="text-[#aab0b4]" />
              </div>
            </div>
          </div>
        </div>
        <RightPanel />
      </div>

      <ChannelSettings />
      <div className="absolute bottom-0 left-0 right-0"><Transport /></div>
    </div>
  );
}
